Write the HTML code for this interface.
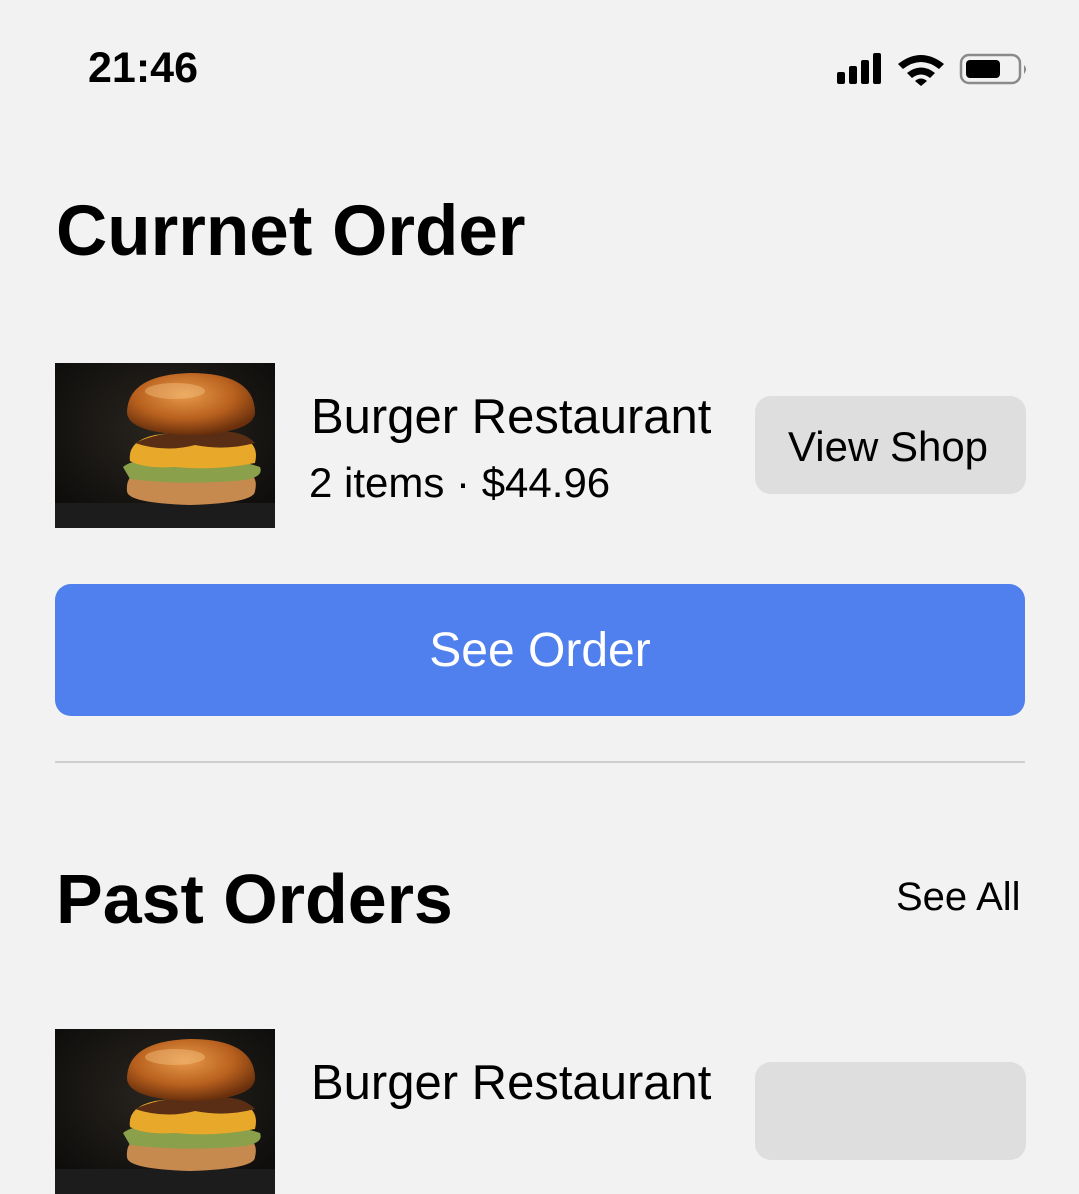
<!DOCTYPE html>
<html><head><meta charset="utf-8"><style>
html,body{margin:0;padding:0;}
body{width:1079px;height:1080px;background:#f2f2f2;position:relative;overflow:hidden;font-family:"Liberation Sans",sans-serif;color:#000;}
.a{position:absolute;white-space:nowrap;}
.btn{position:absolute;background:#dedede;border-radius:16px;}
</style></head><body>
<svg width="0" height="0" style="position:absolute">
<defs>
<radialGradient id="bun" cx="45%" cy="35%" r="65%"><stop offset="0" stop-color="#e89a4a"/><stop offset="0.6" stop-color="#b8601e"/><stop offset="1" stop-color="#6a300c"/></radialGradient>
<radialGradient id="bg" cx="50%" cy="40%" r="70%"><stop offset="0" stop-color="#2a2620"/><stop offset="1" stop-color="#0c0b0a"/></radialGradient>
<g id="burger">
<rect width="220" height="165" fill="url(#bg)"/>
<rect y="140" width="220" height="25" fill="#1c1c1c"/>
<path d="M72 128 Q70 108 95 106 L180 106 Q205 108 200 128 Q200 140 135 142 Q72 140 72 128Z" fill="#c78a4e"/>
<path d="M68 104 Q80 94 120 96 Q170 92 205 104 Q210 116 180 118 Q120 122 75 116Z" fill="#8aa04a"/>
<path d="M75 98 Q72 78 100 72 Q140 66 185 74 Q205 80 200 100 Q160 108 120 104 Q90 106 75 98Z" fill="#e8a82a"/>
<path d="M80 80 Q110 66 150 70 Q185 64 200 80 Q170 88 140 82 Q110 90 80 80Z" fill="#5a2e14"/>
<path d="M72 50 Q72 12 135 10 Q200 10 200 50 Q198 70 135 72 Q74 70 72 50Z" fill="url(#bun)"/>
<ellipse cx="120" cy="28" rx="30" ry="8" fill="#f4c080" opacity="0.45"/>
</g>
</defs>
</svg>

<div class="a" style="left:88px;top:44px;font-size:43px;font-weight:bold;">21:46</div>
<svg class="a" style="left:836px;top:52px" width="194" height="34" viewBox="0 0 194 34">
<rect x="1" y="20" width="8" height="12" rx="2"/>
<rect x="13" y="14" width="8" height="18" rx="2"/>
<rect x="25" y="8" width="8" height="24" rx="2"/>
<rect x="37" y="1" width="8" height="31" rx="2"/>
<path d="M62 12 Q85 -6 108 12 L103 17 Q85 3 67 17Z"/>
<path d="M71 21 Q85 10 99 21 L94 26 Q85 19 76 26Z"/>
<path d="M79 29 L85 34 L91 29 Q85 24 79 29Z"/>
<rect x="125" y="3" width="59" height="28" rx="8" fill="none" stroke="#8a8a8a" stroke-width="2.5"/>
<rect x="130" y="8" width="34" height="18" rx="4"/>
<path d="M188 13 Q192 17 188 22Z" fill="#8a8a8a"/>
</svg>

<div class="a" style="left:56px;top:191px;font-size:71px;font-weight:bold;">Currnet Order</div>

<svg class="a" style="left:55px;top:363px" width="220" height="165"><use href="#burger"/></svg>
<div class="a" style="left:311px;top:389px;font-size:49px;">Burger Restaurant</div>
<div class="a" style="left:309px;top:459px;font-size:42px;">2 items · $44.96</div>
<div class="btn" style="left:755px;top:396px;width:271px;height:98px;"></div>
<div class="a" style="left:788px;top:423px;font-size:42px;">View Shop</div>

<div class="a" style="left:55px;top:584px;width:970px;height:132px;background:#4f80ee;border-radius:16px;"></div>
<div class="a" style="left:55px;top:623px;width:970px;text-align:center;font-size:48px;color:#fff;">See Order</div>

<div class="a" style="left:55px;top:761px;width:970px;height:2px;background:#cfcfcf;"></div>

<div class="a" style="left:56px;top:859px;font-size:70px;font-weight:bold;">Past Orders</div>
<div class="a" style="left:896px;top:875px;font-size:40px;">See All</div>

<svg class="a" style="left:55px;top:1029px" width="220" height="165"><use href="#burger"/></svg>
<div class="a" style="left:311px;top:1055px;font-size:49px;">Burger Restaurant</div>
<div class="btn" style="left:755px;top:1062px;width:271px;height:98px;"></div>
</body></html>
